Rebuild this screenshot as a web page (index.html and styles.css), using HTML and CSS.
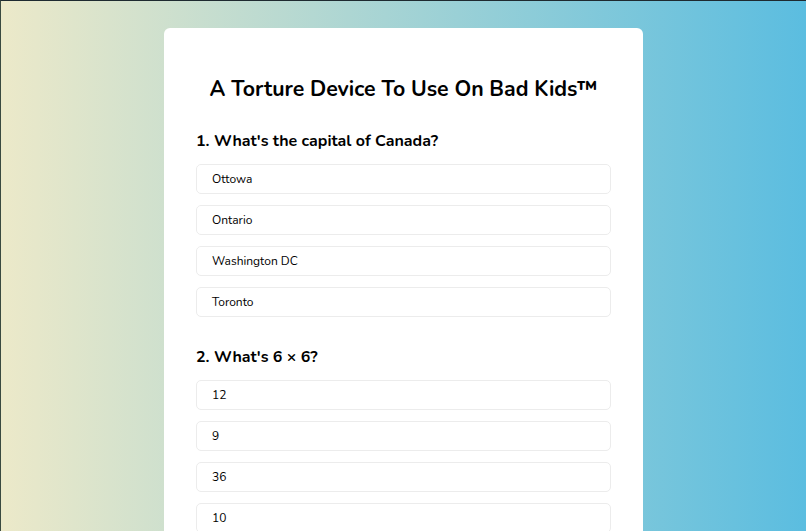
FILE: index.html
```html
<!DOCTYPE html>
<html lang="en">
<head>
    <meta charset="UTF-8">
    <meta name="viewport" content="width=device-width, initial-scale=1.0">
    <title>Quiz</title>
    <link rel="stylesheet" href="styles.css">
</head>
<body>
    <div class="quiz">
        <h1>A Torture Device To Use On Bad Kids™</h1>

        <div class="question">
            <h2>1. What's the capital of Canada?</h2>
            <div class="answers">
                <div class="answer">Ottowa</div>
                <div class="answer">Ontario</div>
                <div class="answer">Washington DC</div>
                <div class="answer">Toronto</div>
            </div>
        </div>

        <div class="question">
            <h2>2. What's 6 × 6?</h2>
            <div class="answers">
                <div class="answer">12</div>
                <div class="answer">9</div>
                <div class="answer">36</div>
                <div class="answer">10</div>
            </div>
        </div>
    </div>
</body>
</html>
```

FILE: styles.css
```css
html {
    background: #1e2a30;
}
body {
    font-family: 'Nunito', 'Lato', sans-serif;
    margin: 0;
    min-height: 100vh;
    padding-top: 27px;
    box-sizing: border-box;
    background: linear-gradient(to right, #ece9c9, #5bbde0);
    color: #000;
    border-top: 1px solid #1e2a30;
    border-left: 1px solid #3a4a40;
    border-radius: 0 0 6px 6px;
}
.quiz {
    width: 479px;
    margin: 0 auto;
    background-color: #fff;
    border-radius: 6px;
    padding: 46px 32px 32px;
    box-sizing: border-box;
}
h1 {
    font-size: 21.3px;
    font-weight: 700;
    text-align: center;
    margin: 0 0 26px;
}
h2 {
    font-size: 16px;
    font-weight: 700;
    margin: 0 0 12px;
}
.question {
    margin-bottom: 29px;
}
.answers {
    display: flex;
    flex-direction: column;
    gap: 11px;
}
.answer {
    height: 30px;
    box-sizing: border-box;
    display: flex;
    align-items: center;
    padding: 0 15px;
    border: 1px solid #ececec;
    border-radius: 5px;
    font-size: 12px;
    color: #000;
}
```
